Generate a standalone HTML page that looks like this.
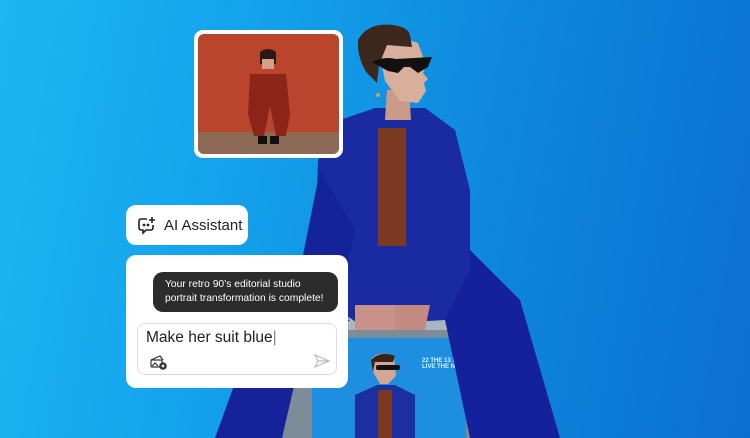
<!DOCTYPE html>
<html><head><meta charset="utf-8"><style>
*{margin:0;padding:0;box-sizing:border-box}
body{width:750px;height:438px;overflow:hidden;position:relative;font-family:"Liberation Sans",sans-serif;background:linear-gradient(100deg,#1cb6f2 0%,#14a3ec 30%,#0e86dc 65%,#0b6fd2 100%)}
svg.bg{position:absolute;left:0;top:0}
.thumb{position:absolute;left:194px;top:30px;width:149px;height:128px;background:#fff;border-radius:9px;padding:4px}
.thumb svg{display:block;border-radius:6px}
.pill{position:absolute;left:126px;top:205px;width:122px;height:40px;background:#fff;border-radius:10px;display:flex;align-items:center;padding-left:11px;font-size:15px;color:#222;white-space:nowrap}
.pill svg{margin-right:7px}
.card{position:absolute;left:126px;top:255px;width:222px;height:133px;background:#fff;border-radius:10px}
.bub{position:absolute;left:27px;top:17px;width:185px;height:40px;background:#2c2c2c;border-radius:10px;color:#fff;font-size:10.3px;line-height:14px;padding:6px 0 0 12px;white-space:nowrap}
.inp{position:absolute;left:11px;top:68px;width:200px;height:52px;border:1px solid #ddd;border-radius:8px}
.inp .t{position:absolute;left:8px;top:5px;font-size:15.5px;color:#222}
</style></head><body>
<svg class="bg" width="750" height="438">
<!-- TV -->
<rect x="283" y="318" width="212" height="120" fill="#7d8c99"/>
<rect x="290" y="318" width="200" height="12" fill="#a9b6c0"/>
<rect x="312" y="338" width="154" height="100" fill="#1e8fe0"/>
<path d="M372 358 q10 -8 22 -2 l2 20 -8 8 h-8 l-7 -12z" fill="#d2a796"/>
<path d="M371 360 q10 -10 24 -4 l-2 6 h-18 l-2 10 z" fill="#3a2418"/>
<rect x="376" y="365" width="24" height="5" rx="2" fill="#111"/>
<path d="M355 395 l22 -10 h18 l20 10 l0 43 h-60z" fill="#1b2fa0"/>
<rect x="378" y="390" width="14" height="48" fill="#7a3a20"/>
<text x="422" y="362" fill="#d8f0ff" font-size="6" font-weight="bold" font-family="Liberation Sans">22 THE 13 SCENT</text>
<text x="422" y="368" fill="#d8f0ff" font-size="6" font-weight="bold" font-family="Liberation Sans">LIVE THE NOW</text>
<!-- legs -->
<path d="M265 300 L215 438 H282 L300 360 L350 320z" fill="#16229a"/>
<path d="M420 270 L470 250 L520 300 L560 438 H470 L445 320z" fill="#15219a"/>
<!-- torso jacket -->
<path d="M340 120 L375 108 L425 108 L455 130 L470 190 L470 270 L445 320 L360 325 L325 300 L315 250 L318 160z" fill="#1a2aa0"/>
<path d="M378 128 h28 v118 h-28z" fill="#7a3a22"/>
<path d="M320 170 L300 270 L340 300 L355 230z" fill="#15239a"/>
<!-- hands -->
<path d="M355 305 h40 l5 25 h-45z" fill="#c8928a"/>
<path d="M395 305 h35 l-5 25 h-30z" fill="#c28a80"/>
<!-- neck, head -->
<path d="M387 90 h22 l2 30 h-26z" fill="#c89a8a"/>
<path d="M378 45 q20 -10 40 -2 l8 22 l-3 8 l5 6 l-4 4 l2 8 l-8 12 l-18 -2 l-15 -20z" fill="#d8ae9c"/>
<path d="M358 40 q10 -18 35 -15 q15 2 17 10 l2 12 l-25 -2 l-8 20 l-2 18 l-10 -10 q-10 -15 -9 -33z" fill="#3b271c"/>
<path d="M372 62 q12 -6 24 -3 l36 -2 l-4 10 l-10 6 l-8 -6 l-6 0 l-6 6 l-10 -2z" fill="#111"/>
<circle cx="378" cy="95" r="2" fill="#c9a060"/>
</svg>
<div class="thumb"><svg width="141" height="120">
<rect width="141" height="120" fill="#b8452c"/>
<rect y="98" width="141" height="22" fill="#8d6a55"/>
<path d="M62 18 q8 -6 16 0 v12 h-16z" fill="#2b1a12"/>
<rect x="64" y="25" width="12" height="10" fill="#d4a08a"/>
<path d="M52 40 h36 l4 40 l-4 22 h-10 l-6 -30 l-6 30 h-10 l-6 -22z" fill="#8d2418"/>
<rect x="60" y="102" width="9" height="8" fill="#111"/><rect x="72" y="102" width="9" height="8" fill="#111"/>
</svg></div>
<div class="pill"><svg width="20" height="20" viewBox="0 0 20 20" fill="none" stroke="#222" stroke-width="1.6"><path d="M10 4H4a2 2 0 0 0-2 2v7a2 2 0 0 0 2 2h2v3l3-3h5a2 2 0 0 0 2-2v-3"/><path d="M15 2v6M12 5h6"/><circle cx="7" cy="10" r=".6" fill="#222"/><circle cx="11" cy="10" r=".6" fill="#222"/></svg>AI Assistant</div>
<div class="card">
<div class="bub">Your retro 90’s editorial studio<br>portrait transformation is complete!</div>
<div class="inp"><div class="t">Make her suit blue<span style="color:#888">|</span></div>
<svg style="position:absolute;left:12px;top:30px" width="18" height="16" viewBox="0 0 18 16" fill="none" stroke="#333" stroke-width="1.2"><path d="M1 6l9-4 3 4"/><rect x="1" y="6" width="11" height="7" rx="1"/><path d="M2 12l3-3 3 3"/><circle cx="13" cy="12" r="3.2" fill="#333"/><path d="M13 10.5v3M11.5 12h3" stroke="#fff"/></svg>
<svg style="position:absolute;left:176px;top:30px" width="16" height="14" viewBox="0 0 16 14" fill="none" stroke="#bbb" stroke-width="1.2"><path d="M1 1l14 6-14 6 3-6z M4 7h11"/></svg>
</div></div>
</body></html>
